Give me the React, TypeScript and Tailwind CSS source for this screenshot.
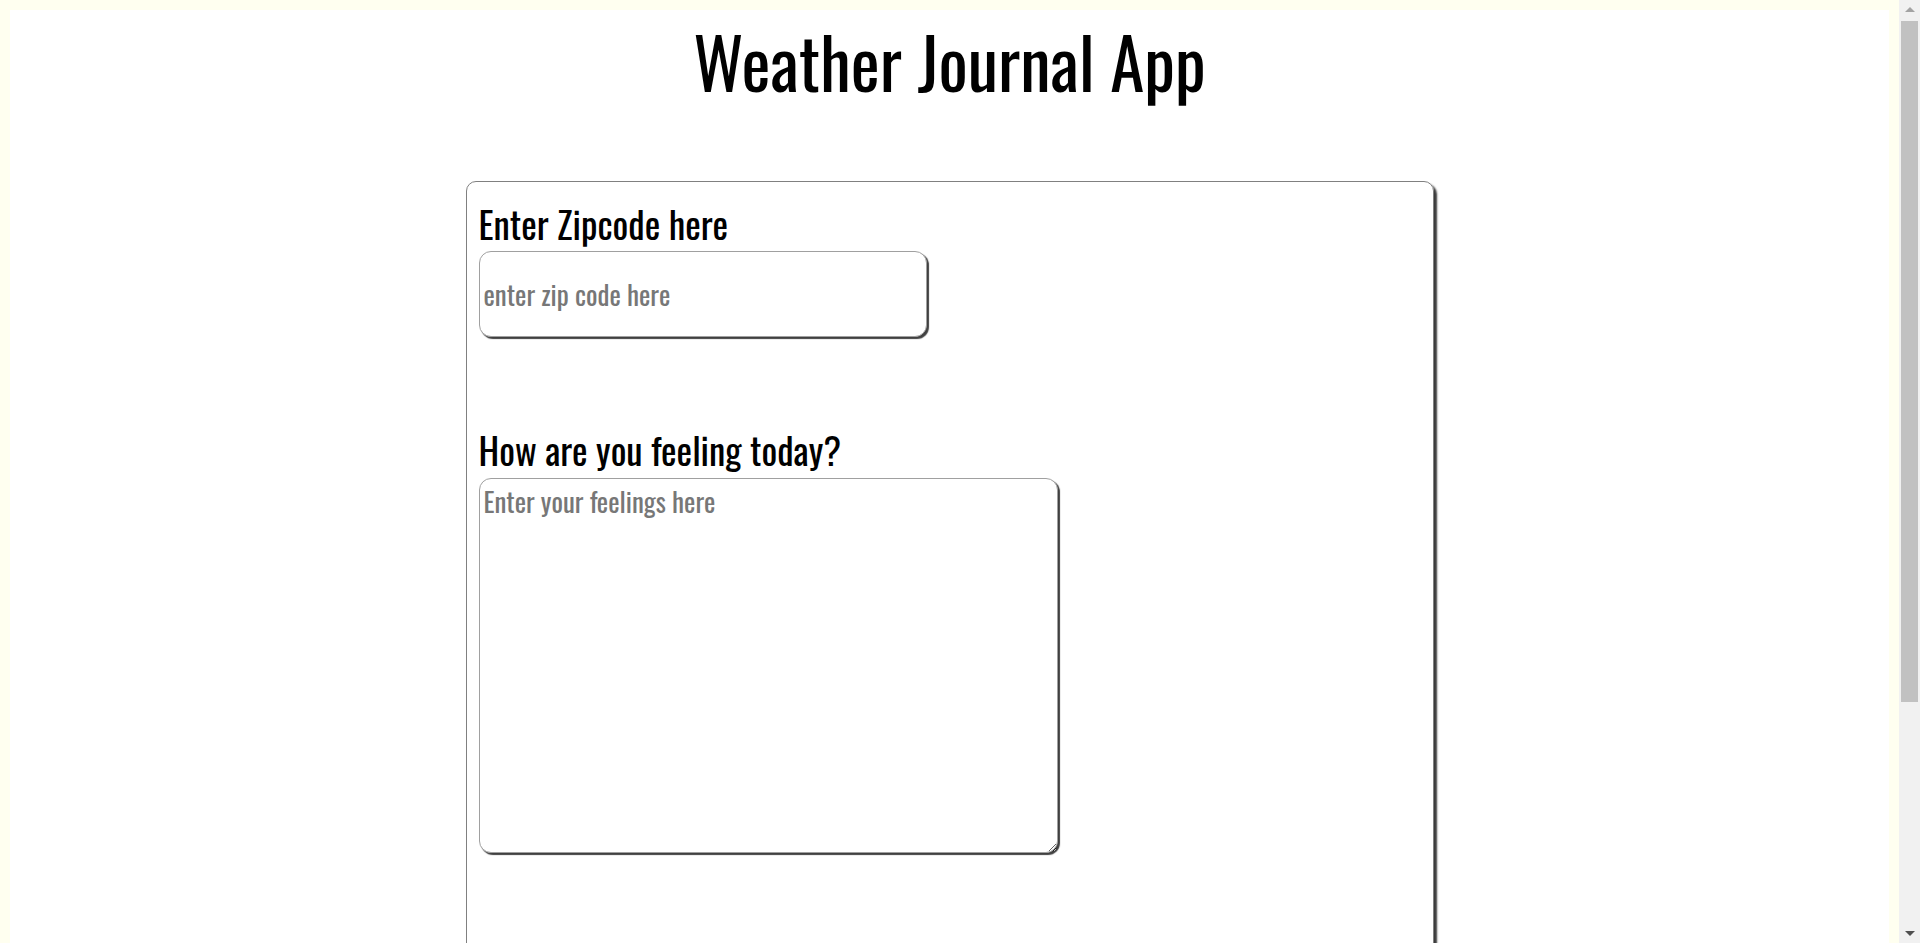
import React from 'react';

// fake browser scrollbar, as it shows in the screenshot
function ScrollBar() {
  return (
    <div className="flex h-full w-[21px] shrink-0 flex-col items-center bg-[#f1f1f1]">
      <div className="flex h-[19px] w-full items-center justify-center">
        <div className="h-0 w-0 border-x-[5px] border-b-[5px] border-x-transparent border-b-[#a3a3a3]" />
      </div>
      <div className="mt-[2px] h-[681px] w-[17px] bg-[#c1c1c1]" />
      <div className="flex-1" />
      <div className="flex h-[19px] w-full items-center justify-center">
        <div className="h-0 w-0 border-x-[5px] border-t-[5px] border-x-transparent border-t-[#505050]" />
      </div>
    </div>
  );
}

export default function App() {
  return (
    <div className="flex h-screen overflow-hidden bg-[#fffff0] font-['Oswald','DejaVu_Sans_Condensed',sans-serif] text-black">
      <div className="min-w-0 flex-1 p-[10px]">
        <div className="bg-white pb-[18px]">
          {/* Title */}
          <h1 className="pt-[17px] text-center text-[69px] leading-none font-normal">
            Weather Journal App
          </h1>

          {/* Journal card */}
          <div className="mx-auto mt-[85px] h-[1050px] w-[968px] rounded-[10px] border border-[#808080] px-[12px] pt-[23px] shadow-[3px_3px_2px_#3a3a3a]">
            <label htmlFor="zip" className="block text-[37px] leading-none">
              Enter Zipcode here
            </label>
            <input
              id="zip"
              type="text"
              placeholder="enter zip code here"
              className="mt-[9px] block h-[86px] w-[448px] rounded-[12px] border border-[#a0a0a0] bg-white pl-[4px] text-[27px] shadow-[2px_2px_1px_#404040] outline-none placeholder:text-[#777]"
            />

            <label htmlFor="feelings" className="mt-[94px] block text-[37px] leading-none">
              How are you feeling today?
            </label>
            <textarea
              id="feelings"
              placeholder="Enter your feelings here"
              className="mt-[10px] block h-[375px] w-[579px] rounded-[12px] border border-[#a0a0a0] bg-white pt-[2px] pl-[4px] text-[27px] shadow-[2px_2px_1px_#404040] outline-none placeholder:text-[#777]"
            />
          </div>
        </div>
      </div>
      <ScrollBar />
    </div>
  );
}
